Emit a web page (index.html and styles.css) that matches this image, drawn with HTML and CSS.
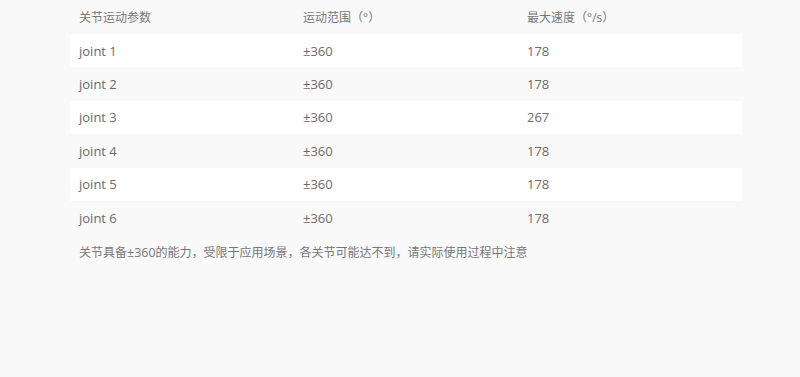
FILE: index.html
```html
<!DOCTYPE html>
<html>
<head>
<meta charset="utf-8">
<link rel="stylesheet" href="styles.css">
</head>
<body>
<div class="wrap">
  <div class="table">
    <div class="row head"><div class="cell">关节运动参数</div><div class="cell">运动范围（°）</div><div class="cell">最大速度（°/s）</div></div>
    <div class="row odd"><div class="cell">joint 1</div><div class="cell">±360</div><div class="cell">178</div></div>
    <div class="row"><div class="cell">joint 2</div><div class="cell">±360</div><div class="cell">178</div></div>
    <div class="row odd"><div class="cell">joint 3</div><div class="cell">±360</div><div class="cell">267</div></div>
    <div class="row"><div class="cell">joint 4</div><div class="cell">±360</div><div class="cell">178</div></div>
    <div class="row odd"><div class="cell">joint 5</div><div class="cell">±360</div><div class="cell">178</div></div>
    <div class="row"><div class="cell">joint 6</div><div class="cell">±360</div><div class="cell">178</div></div>
  </div>
  <p class="note">关节具备<span class="lat">±360</span>的能力，受限于应用场景，各关节可能达不到，请实际使用过程中注意</p>
</div>
</body>
</html>
```
FILE: styles.css
```css
html, body {
  margin: 0;
  padding: 0;
  background: #f9f9f9;
  height: 100%;
}
body {
  font-family: "Open Sans", "Noto Sans CJK SC", sans-serif;
  font-size: 13px;
  color: #6b6b6b;
}
.wrap {
  padding-left: 70px;
  width: 672px;
}
.table {
  display: flex;
  flex-direction: column;
}
.row {
  display: grid;
  grid-template-columns: 224px 224px 224px;
  height: 33.4px;
  align-items: center;
}
.row.head {
  height: 34px;
  padding-top: 2px;
  box-sizing: border-box;
  font-size: 12px;
  color: #777;
}
.row.odd {
  background: #ffffff;
}
.cell {
  padding-left: 9px;
  line-height: 18px;
}
.note {
  margin: 0;
  padding-top: 9px;
  padding-left: 9px;
  line-height: 20px;
  font-size: 12px;
  color: #777;
}
.lat {
  font-size: 12.5px;
}
```
